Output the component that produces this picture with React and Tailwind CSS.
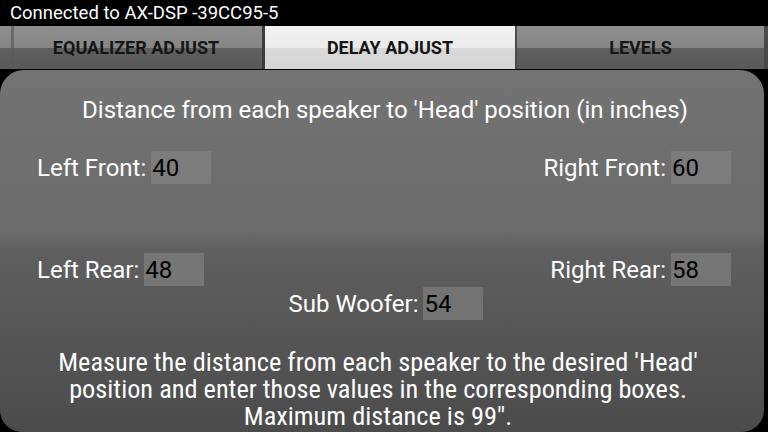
import React from 'react';

/* ─── Données ─────────────────────────────────────────────── */
const TABS = [
  { label: 'EQUALIZER ADJUST', w: 'w-[265px] pl-[10px]', active: false },
  { label: 'DELAY ADJUST', w: 'w-[250px]', active: true },
  { label: 'LEVELS', w: 'flex-1', active: false },
];

/* ─── Champ de distance ───────────────────────────────────── */
const Field = ({ label, value, box = 'bg-[#7c7c7c]' }) => (
  <div className="flex items-center">
    <span className="text-white text-[24px] leading-none mr-[5px]">{label}</span>
    <div className={`w-[60px] h-[33px] ${box} flex items-center pl-[1px] text-black text-[24px] leading-none`}>
      {value}
    </div>
  </div>
);

export default function App() {
  return (
    <div className="w-[768px] h-[432px] bg-black overflow-hidden flex flex-col font-['Roboto',sans-serif]">
      {/* Barre d'état */}
      <div className="h-[26px] flex items-center pl-[10px] text-white text-[18.5px] leading-none">
        Connected to AX-DSP -39CC95-5
      </div>

      {/* Onglets */}
      <div className="h-[43px] flex">
        {TABS.map((t, i) => (
          <div
            key={t.label}
            className={[
              t.w,
              'relative flex items-center justify-center font-bold text-[18px] text-[#151515]',
              t.active
                ? 'bg-[linear-gradient(to_bottom,#f2f2f2_0%,#ebebeb_50%,#d9d9d9_52%,#d4d4d4_100%)]'
                : 'bg-[linear-gradient(to_bottom,#8e8e8e_0%,#868686_50%,#5f5f5f_52%,#595959_100%)]',
              i === 0 ? 'border-r-[3px] border-[#3c3c3c]' : '',
              i === 2 ? 'border-l-[2px] border-r-[4px] border-[#4a4a4a]' : '',
            ].join(' ')}
          >
            {i === 0 && <div className="absolute left-[11px] top-0 bottom-0 w-[3px] bg-[#5a5a5a]/70" />}
            {t.label}
          </div>
        ))}
      </div>

      {/* Panneau principal */}
      <div className="flex-1 mt-[1px] mr-[4px] rounded-t-[24px] rounded-b-[22px] bg-[linear-gradient(to_bottom,#737373_0%,#6b6b6b_45%,#5f5f5f_50%,#4b4b4b_100%)] flex flex-col pt-[28px] pl-[37px] pr-[33px]">
        <p className="text-white text-[24px] leading-none text-center pl-[2px]">
          Distance from each speaker to 'Head' position (in inches)
        </p>

        <div className="flex justify-between mt-[29px]">
          <Field label="Left Front:" value="40" />
          <Field label="Right Front:" value="60" />
        </div>

        <div className="flex justify-between mt-[69px]">
          <Field label="Left Rear:" value="48" box="bg-[#767676]" />
          <Field label="Right Rear:" value="58" box="bg-[#767676]" />
        </div>

        <div className="flex justify-center mt-[1px] pl-[4px]">
          <Field label="Sub Woofer:" value="54" box="bg-[#737373]" />
        </div>

        <p className="mt-[29px] text-white text-[26.3px] leading-[27px] text-center font-['Roboto_Condensed','Roboto',sans-serif] pr-[12px]">
          Measure the distance from each speaker to the desired 'Head'
          <br />
          position and enter those values in the corresponding boxes.
          <br />
          Maximum distance is 99".
        </p>
      </div>
    </div>
  );
}
